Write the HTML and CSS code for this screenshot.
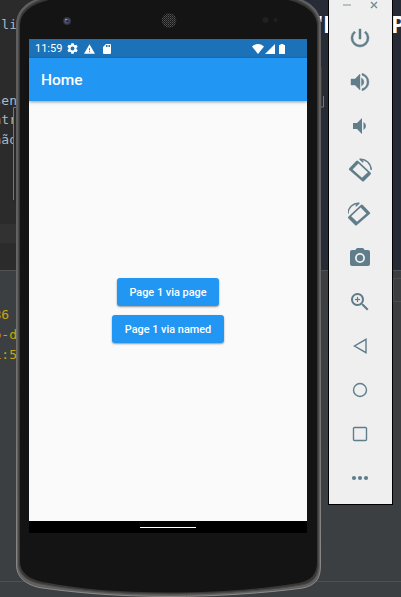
FILE: index.html
```html
<!DOCTYPE html>
<html lang="pt">
<head>
<meta charset="utf-8">
<title>Emulator</title>
<link rel="stylesheet" href="styles.css">
</head>
<body>
<div class="desktop">
  <div class="ide">
    <div class="upper">
      <div class="editor">
        <p class="code first">li</p>
        <p class="code">sen</p>
        <p class="code">ntr</p>
        <p class="code">não</p>
        <div class="current-line"></div>
      </div>
      <div class="preview"><span class="behind">'H</span><span class="behind">P</span></div>
    </div>
    <div class="console">
      <p class="log">86 </p>
      <p class="log">o-d</p>
      <p class="log">1:5</p>
      <div class="console-tab"></div>
    </div>
    <div class="footer"></div>
  </div>

  <div class="phone">
    <svg class="frame" viewBox="0 0 312 597" width="312" height="597">
      <defs>
        <linearGradient id="key" x1="0" x2="1" y1="0" y2="0"><stop offset="0" stop-color="#555"/><stop offset="1" stop-color="#222"/></linearGradient>
        <linearGradient id="edge" gradientUnits="userSpaceOnUse" x1="0" x2="0" y1="200" y2="597"><stop offset="0" stop-color="#606060"/><stop offset=".7" stop-color="#807e7c"/><stop offset="1" stop-color="#8c8a88"/></linearGradient>
        <pattern id="mesh" width="2" height="2" patternUnits="userSpaceOnUse"><rect width="2" height="2" fill="#171717"/><rect width="1" height="1" fill="#555"/><rect x="1" y="1" width="1" height="1" fill="#3c3c3c"/></pattern>
      </defs>
      <path d="M1.500 107v93q0 3 3 4V107z" fill="#292929"/>
      <path d="M4 107.500H1.500V200" fill="none" stroke="#777"/>
      <rect x="308" y="67" width="3" height="40" fill="url(#key)"/>
      <path d="M311.500 96v11h-3" fill="none" stroke="#777"/>
      <path d="M4.500 25C4.500 9 17 0 34 -3H279C297 0 308.500 10 308.500 25V565C308.500 580 303 585 291 588C254 593 203 596.500 157 596.500C108 596.500 65 593 27 587.500C12 584 4.500 576 4.500 565Z" fill="#606060" stroke="url(#edge)"/>
      <path d="M6.500 25C6.500 11 18 2 35 -2H278C295 2 306.500 12 306.500 25V563C306.500 577 301 583 289 585C253 591 202 594 157 594C108 594 66 591 29 584C14 581 6.500 574 6.500 563Z" fill="#393736" stroke="#4b4948"/>
      <path d="M8 26C8 12 20 4 37 0H276C293 4 305 13 305 26V561C305 575 299 580 287 583C252 589 201 592.500 157 592.500C108 592.500 67 589 31 582C16 579 8 572 8 561Z" fill="#141414"/>
      <circle cx="55" cy="21" r="4" fill="#30323a"/><circle cx="55" cy="21" r="2.600" fill="#535a78"/><circle cx="55.500" cy="21.300" r="1.300" fill="#25205f"/><circle cx="54" cy="19.500" r=".8" fill="#aaa"/>
      <circle cx="157" cy="20.500" r="7.300" fill="url(#mesh)"/>
      <circle cx="253.500" cy="20" r="3" fill="#202020"/><circle cx="263.500" cy="20" r="2" fill="#202020"/>
    </svg>
    <div class="screen">
      <div class="status">
        <span class="time">11:59</span>
        <svg class="gear" viewBox="2 2 20 20"><path d="M19.140 12.940c.04-.3.060-.61.060-.94s-.02-.64-.07-.94l2.030-1.580a.5.5 0 0 0 .12-.61l-1.920-3.320a.5.5 0 0 0-.59-.22l-2.390.96a7 7 0 0 0-1.620-.94l-.36-2.540A.5.5 0 0 0 13.920 2.400h-3.840a.5.5 0 0 0-.47.41l-.36 2.540a7 7 0 0 0-1.620.94l-2.390-.96a.5.5 0 0 0-.59.220L2.740 8.870a.5.5 0 0 0 .12.610l2.030 1.580a6 6 0 0 0 0 1.880l-2.030 1.580a.5.5 0 0 0-.12.610l1.920 3.320c.12.220.37.290.59.220l2.390-.96c.5.380 1.030.7 1.620.94l.36 2.540c.05.240.24.410.48.410h3.840c.24 0 .44-.17.470-.41l.36-2.540a7 7 0 0 0 1.620-.94l2.390.96c.22.080.47 0 .59-.22l1.920-3.320a.5.5 0 0 0-.12-.61zM12 15.600A3.600 3.600 0 1 1 12 8.400a3.600 3.600 0 0 1 0 7.200z"/></svg>
        <svg class="warn" viewBox="1 2 22 19"><path d="M1 21h22L12 2zm12-3h-2v-2h2zm0-4h-2v-4h2z"/></svg>
        <svg class="card" viewBox="4 2 16 20"><path d="M18 2h-8L4 8v12a2 2 0 0 0 2 2h12a2 2 0 0 0 2-2V4a2 2 0 0 0-2-2zm-6 6h-2V4h2zm3 0h-2V4h2zm3 0h-2V4h2z"/></svg>
        <svg class="wifi" viewBox="0 0 12 10"><path d="M0 2.500Q6-2.300 12 2.500L6 10z"/></svg>
        <svg class="signal" viewBox="0 0 10 10"><path d="M0 10H10V0z"/></svg>
        <svg class="battery" viewBox="0 0 6 10"><path d="M1.500 0h3v1H6v9H0V1h1.500z"/></svg>
      </div>
      <header class="appbar"><h1>Home</h1></header>
      <main class="content">
        <button class="btn">Page 1 via page</button>
        <button class="btn wide">Page 1 via named</button>
      </main>
      <div class="nav"><span class="handle"></span></div>
    </div>
  </div>

  <aside class="tools">
    <div class="window-controls">
      <svg viewBox="0 0 8 8"><path d="M0 4h8" stroke="#a4b2b8" stroke-width="1.500"/></svg>
      <svg viewBox="0 0 8 8"><path d="M1 1l6 6M7 1L1 7" stroke="#738b96" stroke-width="1.400"/></svg>
    </div>
    <svg class="tool" viewBox="0 0 24 24"><path d="M13 3h-2v10h2zm4.830 2.170-1.420 1.420A7 7 0 1 1 7.580 6.580L6.170 5.170A9 9 0 1 0 17.830 5.170z" stroke="#607d8b" stroke-width=".5"/></svg>
    <svg class="tool" viewBox="0 0 24 24"><path d="M3 9v6h4l5 5V4L7 9zm10.500-1v8a4.500 4.500 0 0 0 0-8zM14 3.230v2.060a7 7 0 0 1 0 13.420v2.060a9 9 0 0 0 0-17.540z" stroke="#607d8b" stroke-width=".4"/></svg>
    <svg class="tool" viewBox="0 0 24 24"><path d="M5 9v6h4l5 5V4L9 9zm10.500-1v8a4.500 4.500 0 0 0 0-8z"/></svg>
    <svg class="tool" viewBox="0 0 24 24"><g id="rotate"><path d="M1.300 10.200 8.200 3q1-1 2 0L22.500 14.500q1 1 0 2L16 23q-1 1-2 0L1.300 12q-1-.9 0-1.800zM4.600 11.500 14 19.800 19.800 14.300 10.400 5.500z" fill-rule="evenodd"/><path d="M11.500 1.300C18 .5 23 6 23.200 12M12 1.300l3.300 3" fill="none" stroke="#607d8b" stroke-width="1.400"/></g></svg>
    <svg class="tool" viewBox="0 0 24 24"><use href="#rotate" transform="matrix(-1 0 0 1 23 0)"/></svg>
    <svg class="tool" viewBox="0 0 24 24"><path fill-rule="evenodd" d="M9 2 7.200 4H4a2 2 0 0 0-2 2v12a2 2 0 0 0 2 2h16a2 2 0 0 0 2-2V6a2 2 0 0 0-2-2h-3.200L15 2zM12 7a5 5 0 1 1 0 10 5 5 0 0 1 0-10zm0 1.800a3.200 3.200 0 1 0 0 6.400 3.200 3.200 0 0 0 0-6.400z"/></svg>
    <svg class="tool" viewBox="0 0 24 24"><path d="M15.500 14h-.79l-.28-.27a6.500 6.500 0 1 0-.7.700l.27.280v.79l5 5L20.500 19zm-6 0a4.500 4.500 0 1 1 0-9 4.500 4.500 0 0 1 0 9z"/><path d="M9 7h1v2h2v1h-2v2H9v-2H7V9h2z" stroke="#607d8b" stroke-width=".2"/></svg>
    <svg class="tool line" viewBox="0 0 24 24"><path d="M18 5.300v13.400L6.500 12z"/></svg>
    <svg class="tool line" viewBox="0 0 24 24"><circle cx="12" cy="12" r="6.500"/></svg>
    <svg class="tool line" viewBox="0 0 24 24"><rect x="5.500" y="5.500" width="13" height="13" rx="1"/></svg>
    <svg class="tool" viewBox="0 0 24 24"><circle cx="6" cy="12" r="2.100"/><circle cx="12" cy="12" r="2.100"/><circle cx="18" cy="12" r="2.100"/></svg>
  </aside>
</div>
</body>
</html>
```

FILE: styles.css
```css
* { box-sizing: border-box; }
body { margin: 0; overflow: hidden; font-family: Roboto, sans-serif; }
p, h1 { margin: 0; }
.desktop { position: relative; width: 401px; height: 597px; overflow: hidden; background: #3c3f41; }

.ide { display: flex; flex-direction: column; height: 597px; }
.upper { display: flex; height: 271px; border-bottom: 1px solid #505254; }
.editor { width: 170px; background: #2b2b2b; }
.preview {
  flex: 1; display: flex; justify-content: space-between; background: #262b35;
  padding: 9px 0 0 147px; color: #fff; font: bold 23px/30px "Open Sans", sans-serif;
}
.behind:last-child { width: 10px; }
.code, .log {
  width: 17px; height: 19.500px; display: flex; justify-content: flex-end; white-space: pre;
  font: 13px/19.500px "DejaVu Sans Mono", monospace; color: #a9b7c6;
}
.code.first { margin: 15px 0 56px; }
.current-line { height: 19px; margin-top: 75px; background: #323232; }
.console { height: 311px; padding-top: 34px; border-bottom: 1px solid #4e5153; }
.log { height: 20px; line-height: 20px; color: #c9a60a; }
.console-tab { width: 8px; height: 24px; margin: -87px 0 0 auto; border: 1px solid #4b4d4f; border-right: 0; }

.phone { position: absolute; left: 12px; top: 0; width: 312px; height: 597px; padding: 39px 0 0 17px; }
.frame { position: absolute; left: 0; top: 0; }
.screen { position: relative; width: 278px; height: 494px; display: flex; flex-direction: column; background: #fafafa; }
.status { height: 19px; display: flex; align-items: center; padding: 0 22px 0 6px; background: #1b72b8; color: #fff; }
.status svg { fill: #fff; height: 10px; }
.time { width: 32px; font-size: 11px; line-height: 20px; }
.status .gear { width: 11px; height: 11px; }
.warn { width: 11px; margin-left: 6px; }
.card { width: 8px; margin-left: 8px; }
.wifi { width: 12px; margin-left: auto; }
.signal { width: 10px; margin-left: 1px; }
.battery { width: 6px; margin-left: 4px; }
.appbar { height: 43px; padding-left: 12px; background: #2196f3; color: #fff; box-shadow: 0 1px 3px rgba(0,0,0,.4); z-index: 1; }
.appbar h1 { font-size: 15.500px; font-weight: 500; line-height: 44px; }
.content { flex: 1; display: flex; flex-direction: column; align-items: center; justify-content: center; gap: 9px; padding-bottom: 1px; }
.btn {
  width: 102px; height: 28px; padding: 0; border: 0; border-radius: 3px; background: #2196f3; color: #fff;
  font: 500 10.900px/29px Roboto, sans-serif; white-space: nowrap; box-shadow: 0 1px 2px rgba(0,0,0,.4);
}
.btn.wide { width: 112px; }
.nav { height: 12px; display: flex; align-items: center; justify-content: center; background: #000; }
.handle { width: 56px; height: 1px; background: #fff; }

.tools {
  position: absolute; left: 328px; top: -1px; width: 65px; height: 506px;
  display: flex; flex-direction: column; align-items: center; gap: 20px;
  padding-right: 1px; background: #efefef; border: 1px solid #000;
}
.window-controls { width: 100%; height: 6px; display: flex; gap: 19px; padding: 1px 0 0 14px; }
.window-controls svg { width: 8px; height: 8px; flex: none; }
.tool { width: 24px; height: 24px; flex: none; fill: #607d8b; }
.tool.line { fill: none; stroke: #607d8b; stroke-width: 1.400; }
```
